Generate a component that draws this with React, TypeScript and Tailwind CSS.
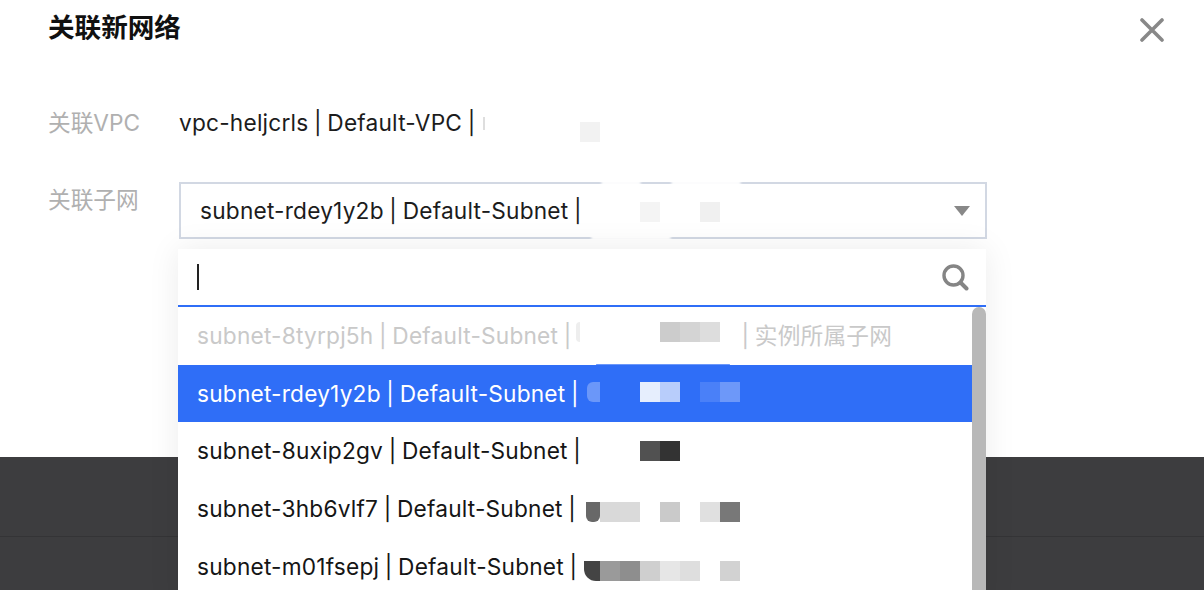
const FONT = "font-['Inter','Noto_Sans_CJK_SC',sans-serif]";

type Cell = { x: number; c: string };

function Mosaic({ cells, top }: { cells: Cell[]; top: string }) {
  return (
    <div className={`absolute left-[402px] h-5 w-[160px] ${top}`}>
      {cells.map((cell, i) => (
        <span key={i} className={`absolute top-0 h-5 w-5 ${cell.c}`} style={{ left: cell.x * 20 }} />
      ))}
    </div>
  );
}

function Row({ name, cls, children }: { name: string; cls: string; children?: React.ReactNode }) {
  return (
    <div className={`relative h-[57.6px] shrink-0 flex items-center pl-[19px] pt-[1px] text-[22.7px] tracking-[0.2px] [word-spacing:-1px] whitespace-nowrap ${cls}`}>
      <span>{name} | Default-Subnet |</span>
      {children}
    </div>
  );
}

export default function App() {
  return (
    <div className={`relative h-[590px] w-[1204px] overflow-hidden bg-white flex flex-col ${FONT}`}>
      <div className="h-[457px] shrink-0 px-12 relative">
        <div className="flex items-start justify-between pt-[11px]">
          <h1 className="text-[26.6px] leading-[32px] font-bold text-[#101010]">关联新网络</h1>
          <svg width="24" height="24" viewBox="0 0 24 24" className="absolute left-[1140px] top-[18px]">
            <path d="M2 2 L22 22 M22 2 L2 22" stroke="#888" strokeWidth="3.6" strokeLinecap="round" />
          </svg>
        </div>

        <div className="flex items-center mt-[64px] h-[32px]">
          <span className="w-[131px] text-[22.7px] text-[#b0b0b0]">关联VPC</span>
          <span className="text-[22.7px] tracking-[0.2px] [word-spacing:-1px] text-[#1c1c1c] whitespace-nowrap">vpc-heljcrls | Default-VPC |</span>
          <span className="ml-[8px] block h-[13px] w-[2px] bg-[#dedede]" />
          <span className="absolute left-[580px] top-[122px] h-5 w-5 bg-[#f2f2f2]" />
        </div>

        <div className="flex items-start mt-[43px]">
          <span className="w-[131px] text-[22.7px] leading-[32px] pt-[2px] text-[#b0b0b0]">关联子网</span>
          <div className="relative w-[808px] h-[57px] border-2 border-[#d2d8e3] flex items-center pl-[19px] pr-[15px] justify-between">
            <span className="pt-[1px] text-[22.7px] tracking-[0.2px] [word-spacing:-1px] text-[#1c1c1c] whitespace-nowrap">subnet-rdey1y2b | Default-Subnet |</span>
            <svg width="16" height="10" viewBox="0 0 16 10">
              <path d="M0 0 H16 L8 10 Z" fill="#888" />
            </svg>
            <span className="absolute left-[459px] top-[18px] h-5 w-5 bg-[#f4f4f4]" />
            <span className="absolute left-[519px] top-[18px] h-5 w-5 bg-[#f0f0f0]" />
            <span className="absolute left-[420px] -top-[3px] h-[4px] w-[40px] rounded-full bg-white blur-[1px]" />
            <span className="absolute left-[490px] -top-[3px] h-[4px] w-[70px] rounded-full bg-white blur-[1px]" />
            <span className="absolute left-[410px] -bottom-[3px] h-[5px] w-[80px] rounded-full bg-white blur-[1px]" />
          </div>
        </div>
      </div>

      <div className="flex-1 bg-[#3d3d3f] flex flex-col">
        <div className="h-[80px] border-b border-[#343436]" />
      </div>

      {/* dropdown overlay */}
      <div className="absolute left-[178px] top-[249px] w-[808px] h-[360px] bg-white flex flex-col shadow-[0_0_30px_rgba(0,0,0,0.08)]">
        <div className="h-[58px] shrink-0 border-b-2 border-[#2f6ef7] flex items-center justify-between pl-[19px] pr-[17px]">
          <span className="block w-[2px] h-[26px] bg-[#222]" />
          <svg width="28" height="28" viewBox="0 0 28 28" fill="none">
            <circle cx="12.5" cy="12.5" r="9.5" stroke="#858585" strokeWidth="3.4" />
            <path d="M19.5 19.5 L25.5 25.5" stroke="#858585" strokeWidth="4" strokeLinecap="round" />
          </svg>
        </div>
        <div className="flex flex-1 min-h-0">
          <div className="flex-1 flex flex-col">
            <Row name="subnet-8tyrpj5h" cls="text-[#c9c9c9]">
              <span className="ml-[170px]">| 实例所属子网</span>
              <span className="absolute left-[398px] top-[15px] h-5 w-[4px] rounded-l-full bg-[#eeeeee]" />
              <span className="absolute left-[418px] bottom-[0px] h-[1px] w-[134px] rounded-full bg-[#6d98f9]" />
              <Mosaic
                top="top-[15px]"
                cells={[
                  { x: 4, c: "bg-[#cccccc]" },
                  { x: 5, c: "bg-[#d4d4d4]" },
                  { x: 6, c: "bg-[#dddddd]" },
                ]}
              />
            </Row>
            <Row name="subnet-rdey1y2b" cls="bg-[#2f6ef7] text-white">
              <Mosaic
                top="top-[17px]"
                cells={[
                  { x: 0.35, c: "bg-[#6b97f9] w-[13px] rounded-l-md" },
                  { x: 3, c: "bg-[#e6eefd]" },
                  { x: 4, c: "bg-[#b8cdfb]" },
                  { x: 6, c: "bg-[#4a80f8]" },
                  { x: 7, c: "bg-[#6d98f9]" },
                ]}
              />
            </Row>
            <Row name="subnet-8uxip2gv" cls="text-[#151515]">
              <Mosaic
                top="top-[19px]"
                cells={[
                  { x: 3, c: "bg-[#515151]" },
                  { x: 4, c: "bg-[#333333]" },
                ]}
              />
            </Row>
            <Row name="subnet-3hb6vlf7" cls="text-[#151515]">
              <Mosaic
                top="top-[22px]"
                cells={[
                  { x: 0.3, c: "bg-[#686868] w-[14px] rounded-b-md" },
                  { x: 1, c: "bg-[#d9d9d9]" },
                  { x: 2, c: "bg-[#dadada]" },
                  { x: 4, c: "bg-[#cacaca]" },
                  { x: 6, c: "bg-[#e0e0e0]" },
                  { x: 7, c: "bg-[#787878]" },
                ]}
              />
            </Row>
            <Row name="subnet-m01fsepj" cls="text-[#151515]">
              <Mosaic
                top="top-[24px]"
                cells={[
                  { x: 0.2, c: "bg-[#444444] w-4 rounded-bl-xl" },
                  { x: 1, c: "bg-[#9a9a9a]" },
                  { x: 2, c: "bg-[#8e8e8e]" },
                  { x: 3, c: "bg-[#cfcfcf]" },
                  { x: 4, c: "bg-[#e6e6e6]" },
                  { x: 5, c: "bg-[#dedede]" },
                  { x: 7, c: "bg-[#d2d2d2]" },
                ]}
              />
            </Row>
          </div>
          <div className="w-[14px] shrink-0 bg-white">
            <div className="h-full bg-[#b8b8b8] rounded-t-[7px]" />
          </div>
        </div>
      </div>
    </div>
  );
}
